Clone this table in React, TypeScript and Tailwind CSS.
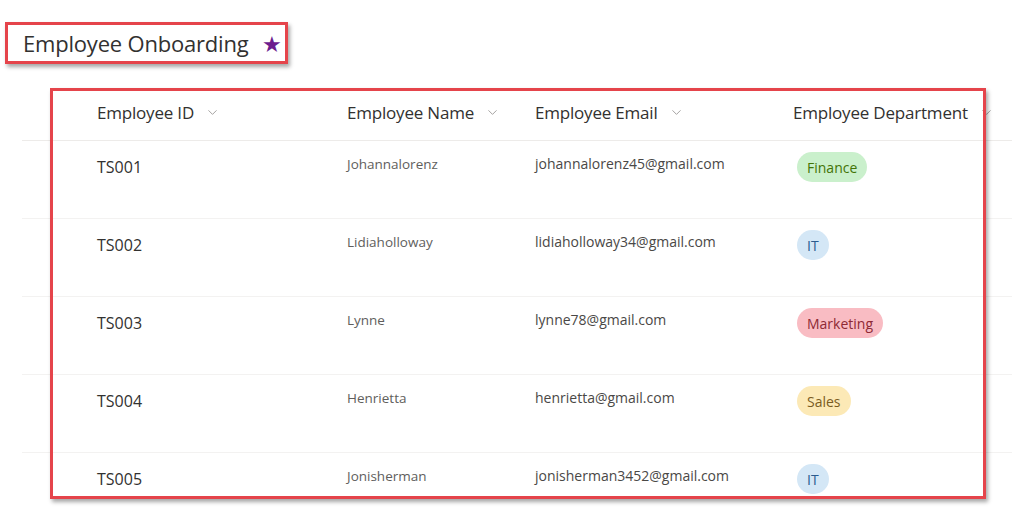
import { ChevronDown } from "lucide-react";

type Row = {
  id: string;
  name: string;
  email: string;
  dept: string;
};

const rows: Row[] = [
  { id: "TS001", name: "Johannalorenz", email: "johannalorenz45@gmail.com", dept: "Finance" },
  { id: "TS002", name: "Lidiaholloway", email: "lidiaholloway34@gmail.com", dept: "IT" },
  { id: "TS003", name: "Lynne", email: "lynne78@gmail.com", dept: "Marketing" },
  { id: "TS004", name: "Henrietta", email: "henrietta@gmail.com", dept: "Sales" },
  { id: "TS005", name: "Jonisherman", email: "jonisherman3452@gmail.com", dept: "IT" },
];

const badgeClass: Record<string, string> = {
  Finance: "bg-[#caf0cc] text-[#437406]",
  IT: "bg-[#d4e7f6] text-[#2b5c8f]",
  Marketing: "bg-[#f9bcc3] text-[#8e2a35]",
  Sales: "bg-[#fce9b6] text-[#7a5c1e]",
};

function HeaderCell({ label, width }: { label: string; width: string }) {
  return (
    <div className={`flex items-center gap-[11px] ${width}`}>
      <span>{label}</span>
      <ChevronDown size={15} strokeWidth={1.25} className="text-[#8a8886]" />
    </div>
  );
}

export default function App() {
  return (
    <div
      className="relative w-[1012px] h-[508px] overflow-hidden bg-white text-[#323130]"
      style={{ fontFamily: '"Open Sans", "Noto Sans", sans-serif' }}
    >
      <div className="flex items-start gap-[14px] pl-[23px] pt-[27px] h-[88px]">
        <h1 className="text-[22px] leading-[32px] tracking-[-0.2px]">Employee Onboarding</h1>
        <span className="text-[#6c1d8f] text-[22px] leading-[32px]">★</span>
      </div>

      <div className="ml-[22px]">
        <div className="flex h-[53px] items-center pl-[75px] pb-[3px] border-b border-[#edebe9] text-[17px] tracking-[-0.2px]">
          <HeaderCell label="Employee ID" width="w-[250px]" />
          <HeaderCell label="Employee Name" width="w-[188px]" />
          <HeaderCell label="Employee Email" width="w-[258px]" />
          <HeaderCell label="Employee Department" width="flex-1" />
        </div>

        {rows.map((r) => (
          <div key={r.id} className="flex h-[78px] pl-[75px] border-b border-[#f3f2f1]">
            <div className="w-[250px] pt-[15px] text-[16px] leading-[22px]">{r.id}</div>
            <div className="w-[188px] pt-[13px] text-[13.5px] leading-[20px] text-[#605e5c]">{r.name}</div>
            <div className="w-[258px] pt-[13px] text-[14px] leading-[20px] text-[#4a4846]">{r.email}</div>
            <div className="flex-1 pt-[11px] pl-1">
              <span
                className={`inline-flex h-[30px] items-center rounded-full px-[10px] text-[14px] ${badgeClass[r.dept]}`}
              >
                {r.dept}
              </span>
            </div>
          </div>
        ))}
      </div>

      <div className="absolute left-[5px] top-[22px] w-[283px] h-[42px] border-[3px] border-[#e5444b] shadow-[2px_3px_4px_rgba(0,0,0,0.35)]" />
      <div className="absolute left-[50px] top-[88px] w-[936px] h-[411px] border-[3px] border-[#e5444b] shadow-[2px_3px_4px_rgba(0,0,0,0.35)]" />
    </div>
  );
}
